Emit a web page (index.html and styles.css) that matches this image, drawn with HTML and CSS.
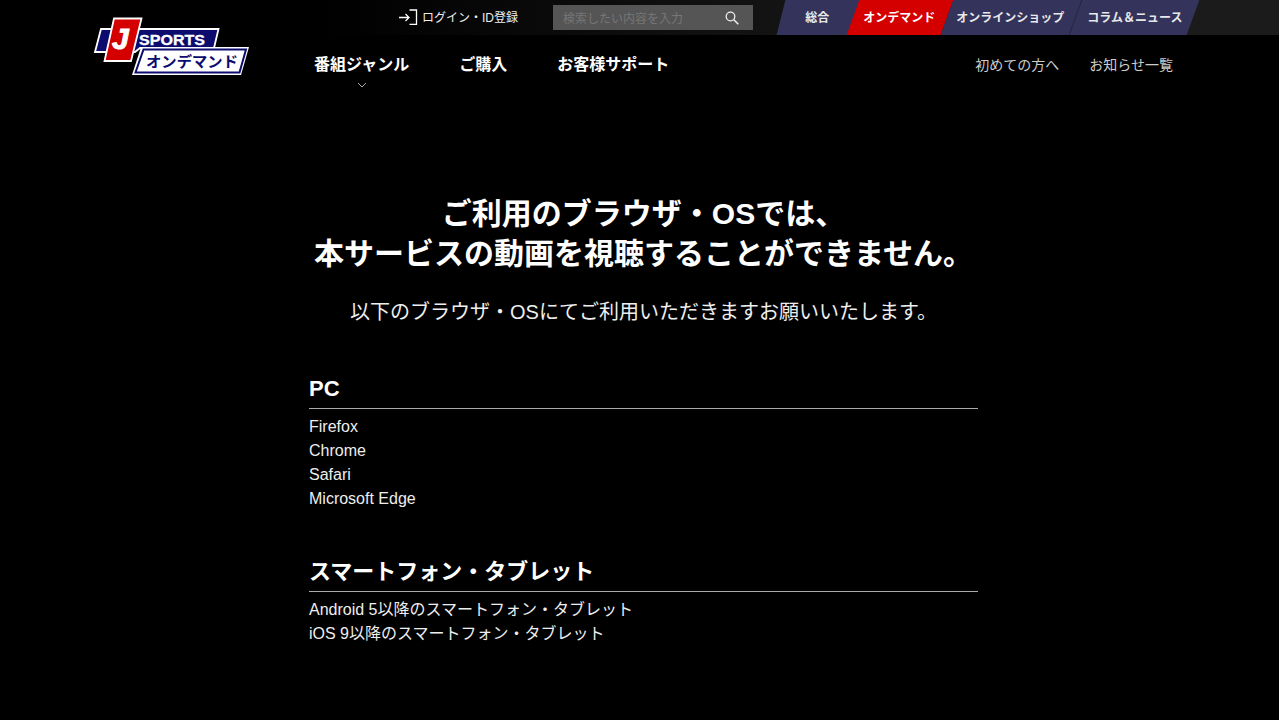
FILE: index.html
```html
<!DOCTYPE html>
<html lang="ja">
<head>
<meta charset="utf-8">
<title>J SPORTS オンデマンド</title>
<link rel="stylesheet" href="styles.css">
</head>
<body>
<header class="header">
  <div class="topbar">
    <a class="login" href="#">
      <svg class="login-icon" width="20" height="16" viewBox="0 0 20 16"><path d="M1 8.500H11M7.500 5L11 8.500L7.500 12M11.500 1H18.500V15.500H11.500" fill="none" stroke="#fff" stroke-width="1.300"/></svg>
      <span>ログイン・ID登録</span>
    </a>
    <div class="search">
      <span class="search-text">検索したい内容を入力</span>
      <svg width="14" height="14" viewBox="0 0 14 14"><circle cx="5.500" cy="5.500" r="4.300" fill="none" stroke="#eee" stroke-width="1.300"/><path d="M8.800 8.800L13.300 13.300" stroke="#eee" stroke-width="1.600"/></svg>
    </div>
    <nav class="tabs">
      <a class="tab tab-all" href="#"><span>総合</span></a>
      <a class="tab tab-active" href="#"><span>オンデマンド</span></a>
      <a class="tab tab-shop" href="#"><span>オンラインショップ</span></a>
      <a class="tab tab-news" href="#"><span>コラム＆ニュース</span></a>
    </nav>
  </div>
  <a class="logo" href="#">
    <svg width="157" height="60" viewBox="0 0 157 60">
      <path d="M7 12H124.500L120 31H46L41 35H1Z" fill="#0b0c6e" stroke="#fff" stroke-width="1.800"/>
      <path d="M20 1.500H47.500L37 44H10.500Z" fill="#d40000" stroke="#fff" stroke-width="1.800"/>
      <path d="M47 30H155L147 58H38Z" fill="#fff"/>
      <path d="M49.500 32.500H152L145.500 55.500H41.500Z" fill="#fff" stroke="#0b0c6e" stroke-width="2"/>
      <text class="logo-j" x="18" y="32">J</text>
      <text class="logo-sports" x="45" y="28" textLength="66" lengthAdjust="spacingAndGlyphs">SPORTS</text>
      <text class="logo-od" x="52" y="50" textLength="92" lengthAdjust="spacingAndGlyphs">オンデマンド</text>
    </svg>
  </a>
  <nav class="mainnav">
    <ul class="nav-left">
      <li class="nav-genre">番組ジャンル
        <svg class="chev" width="10" height="6" viewBox="0 0 10 6"><path d="M1 1L5 5L9 1" fill="none" stroke="#aaa" stroke-width="1"/></svg>
      </li>
      <li>ご購入</li>
      <li>お客様サポート</li>
    </ul>
    <ul class="nav-right">
      <li>初めての方へ</li>
      <li>お知らせ一覧</li>
    </ul>
  </nav>
</header>
<main class="main">
  <h1 class="title">ご利用のブラウザ・OSでは、<br>本サービスの動画を視聴することができません。</h1>
  <p class="lead">以下のブラウザ・OSにてご利用いただきますお願いいたします。</p>
  <section class="group">
    <h2 class="group-title">PC</h2>
    <ul class="group-list">
      <li>Firefox</li>
      <li>Chrome</li>
      <li>Safari</li>
      <li>Microsoft Edge</li>
    </ul>
  </section>
  <section class="group">
    <h2 class="group-title">スマートフォン・タブレット</h2>
    <ul class="group-list">
      <li>Android 5以降のスマートフォン・タブレット</li>
      <li>iOS 9以降のスマートフォン・タブレット</li>
    </ul>
  </section>
</main>
</body>
</html>
```
FILE: styles.css
```css
* { box-sizing: border-box; }
html, body { margin: 0; padding: 0; }
body {
  background: #000;
  color: #fff;
  font-family: "Liberation Sans", "Noto Sans CJK JP", sans-serif;
  height: 720px;
  overflow: hidden;
}
a { color: inherit; text-decoration: none; }
ul { list-style: none; margin: 0; padding: 0; }

.header {
  display: grid;
  grid-template-columns: 94px 155px 1fr;
  grid-template-rows: 35px 65px;
}
.topbar {
  grid-column: 1 / 4;
  grid-row: 1;
  display: flex;
  align-items: flex-start;
  padding-left: 398px;
  background: linear-gradient(90deg, #000 25%, #1b1b1b 75%);
}
.login {
  display: flex;
  align-items: center;
  gap: 4px;
  height: 33px;
  font-size: 12px;
  color: #eee;
}
.search {
  margin: 5px 0 0 35px;
  width: 200px;
  height: 25px;
  background: #555;
  display: flex;
  align-items: center;
  justify-content: space-between;
  padding: 0 14px 0 10px;
}
.search-text { font-size: 12px; color: #757575; }
.tabs {
  display: flex;
  margin-left: 28px;
  height: 35px;
}
.tab {
  display: flex;
  align-items: center;
  justify-content: center;
  height: 35px;
  padding: 0 2px 2px 0;
  font-size: 12px;
  font-weight: 700;
  color: #e8e8e8;
  transform: skewX(-20deg);
  background: #33335c;
  border-right: 1px solid #26263f;
}
.tab span { transform: skewX(20deg); }
.tab-all {
  width: 76px;
  padding-right: 4px;
  transform: skewX(-14deg);
  border-right: 0;
}
.tab-all span { transform: skewX(14deg); }
.tab-active { width: 94px; margin-left: -4px; background: #d40000; color: #fff; border-right: 0; }
.tab-shop { width: 129px; }
.tab-news { width: 117px; padding-right: 0; border-right: 0; }

.logo {
  grid-column: 2;
  grid-row: 1 / 3;
  position: relative;
  z-index: 1;
  margin: 17px 0 0 0;
  display: block;
  height: 60px;
}
.logo svg { display: block; }
.logo-j { font: italic 700 30px "Liberation Sans", sans-serif; fill: #fff; stroke: #fff; stroke-width: 1px; }
.logo-sports { font: 700 15px "Liberation Sans", sans-serif; fill: #fff; stroke: #fff; stroke-width: .3px; }
.logo-od { font: 700 15px "Noto Sans CJK JP", sans-serif; fill: #0b0c6e; }

.mainnav {
  grid-column: 3;
  grid-row: 2;
  display: flex;
  justify-content: space-between;
  padding: 18px 106px 0 65px;
}
.nav-left { display: flex; gap: 50px; font-size: 16px; font-weight: 700; line-height: 24px; }
.nav-genre { position: relative; }
.chev { position: absolute; left: 43px; top: 29px; }
.nav-right { display: flex; gap: 30px; margin-top: -1px; font-size: 14px; line-height: 26px; color: #ccc; }

.main { width: 669px; margin-left: 309px; padding-top: 94px; }
.title {
  margin: 0;
  font-size: 30px;
  line-height: 40px;
  font-weight: 700;
  text-align: center;
}
.lead {
  margin: 18px 0 0;
  font-size: 20px;
  line-height: 40px;
  text-align: center;
  color: #eee;
}
.group { padding-top: 41px; }
.group + .group { padding-top: 45px; }
.group-title {
  margin: 0;
  font-size: 22px;
  line-height: 32px;
  padding-bottom: 3px;
  border-bottom: 1px solid #aaa;
}
.group-list { padding-top: 6px; font-size: 16px; line-height: 24px; color: #eee; }
```
